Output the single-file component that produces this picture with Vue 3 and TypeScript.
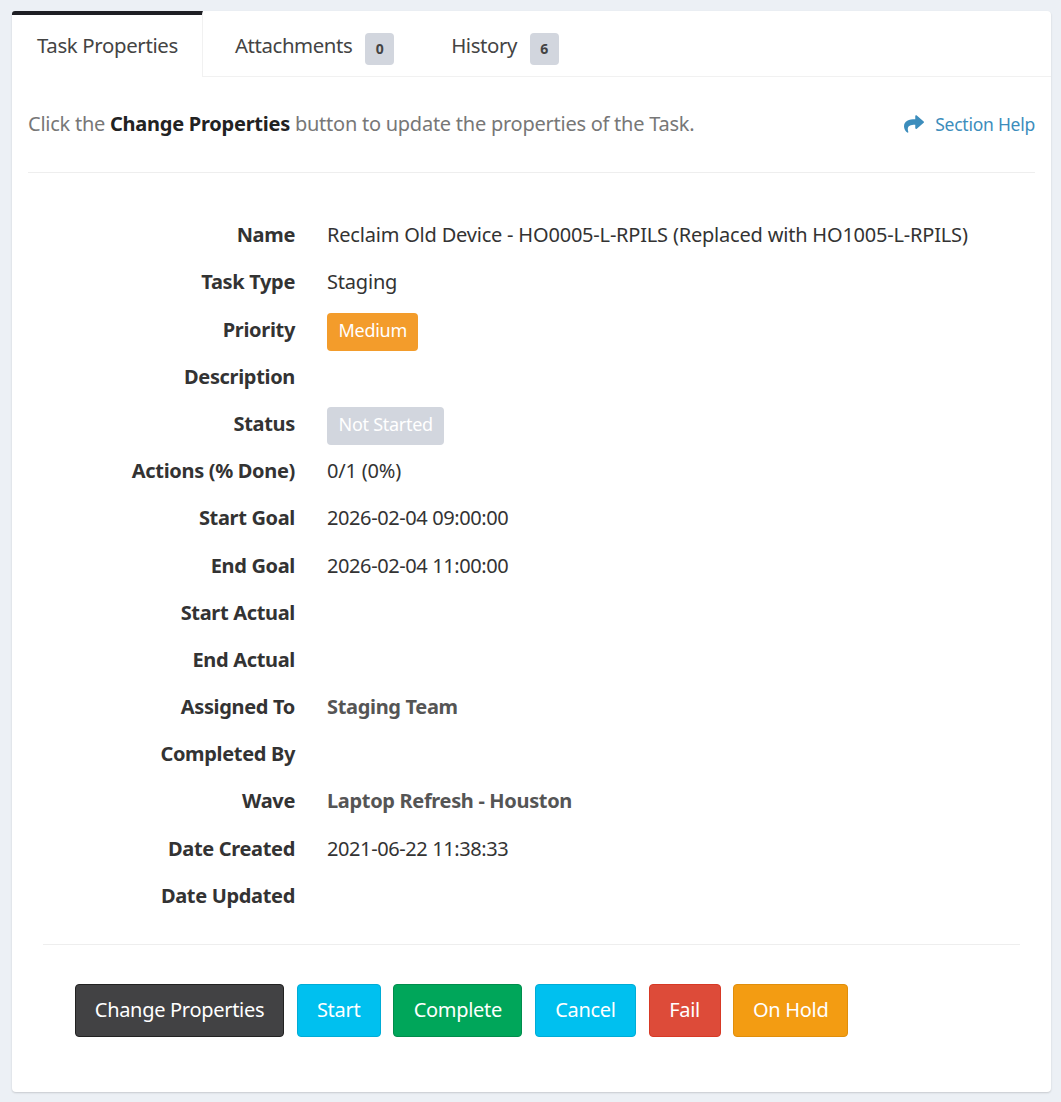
<script setup lang="ts">
type Row = { label: string; value?: string; kind?: 'text' | 'link' | 'medium' | 'muted' | 'date' }
const rows: Row[] = [
  { label: 'Name', value: 'Reclaim Old Device - HO0005-L-RPILS (Replaced with HO1005-L-RPILS)' },
  { label: 'Task Type', value: 'Staging' },
  { label: 'Priority', value: 'Medium', kind: 'medium' },
  { label: 'Description' },
  { label: 'Status', value: 'Not Started', kind: 'muted' },
  { label: 'Actions (% Done)', value: '0/1 (0%)' },
  { label: 'Start Goal', value: '2026-02-04 09:00:00', kind: 'date' },
  { label: 'End Goal', value: '2026-02-04 11:00:00', kind: 'date' },
  { label: 'Start Actual' },
  { label: 'End Actual' },
  { label: 'Assigned To', value: 'Staging Team', kind: 'link' },
  { label: 'Completed By' },
  { label: 'Wave', value: 'Laptop Refresh - Houston', kind: 'link' },
  { label: 'Date Created', value: '2021-06-22 11:38:33', kind: 'date' },
  { label: 'Date Updated' },
]
const buttons = [
  { text: 'Change Properties', cls: 'dark', width: 209 },
  { text: 'Start', cls: 'info', width: 84 },
  { text: 'Complete', cls: 'success', width: 129 },
  { text: 'Cancel', cls: 'info', width: 101 },
  { text: 'Fail', cls: 'danger', width: 72 },
  { text: 'On Hold', cls: 'warning', width: 115 },
]
</script>

<template>
  <div class="page">
    <div class="card">
      <div class="tabs">
        <div class="tab active">Task Properties</div>
        <div class="tab">Attachments <span class="count">0</span></div>
        <div class="tab">History <span class="count">6</span></div>
      </div>
      <div class="body">
        <div class="intro">
          <p>Click the <b>Change Properties</b> button to update the properties of the Task.</p>
          <a class="help">
            <svg width="20" height="20" viewBox="0 0 512 512"><path fill="#3c8dbc" d="M503.7 189.8L327.7 37.9C312.3 24.5 288 35.3 288 56v80.1C127.4 137.9 0 170.1 0 322.3c0 61.4 39.6 122.3 83.3 154.1 13.7 9.9 33.1-2.5 28.1-18.6C66 312.9 132.9 274.3 288 272.1V360c0 20.7 24.3 31.5 39.7 18.2l176-152c11.1-9.6 11.1-26.8 0-36.4z"/></svg>
            <span>Section Help</span>
          </a>
        </div>
        <dl class="props">
          <div v-for="r in rows" :key="r.label" class="row">
            <dt>{{ r.label }}</dt>
            <dd>
              <span v-if="r.kind === 'medium'" class="label orange">{{ r.value }}</span>
              <span v-else-if="r.kind === 'muted'" class="label grey">{{ r.value }}</span>
              <b v-else-if="r.kind === 'link'" class="link">{{ r.value }}</b>
              <span v-else-if="r.kind === 'date'" class="date">{{ r.value }}</span>
              <template v-else>{{ r.value }}</template>
            </dd>
          </div>
        </dl>
        <div class="footer">
          <button v-for="b in buttons" :key="b.text" :class="['btn', b.cls]" :style="{ width: b.width + 'px' }">{{ b.text }}</button>
        </div>
      </div>
    </div>
  </div>
</template>

<style>
html, body { margin: 0; background: #ecf0f5; }
</style>

<style scoped>
.page { padding: 11px 10px 10px 12px; font-family: "Noto Sans", "Open Sans", sans-serif; color: #333; }
.card { background: #fff; border-radius: 4px; box-shadow: 0 1px 2px rgba(0,0,0,.16); }
.tabs { display: flex; height: 66px; box-sizing: border-box; border-bottom: 1px solid #f1f1f1; }
.tab { padding: 20px 25px 0 32px; font-size: 20.4px; color: #444; letter-spacing: -.42px; }
.tab.active { box-sizing: border-box; width: 191px; height: 66px; padding: 16px 0 0 25px; border-top: 4px solid #1e1f24; border-right: 1px solid #f1f1f1; background: #fff; border-top-left-radius: 3px; letter-spacing: -.35px; }
.count { display: inline-block; background: #d2d6de; color: #444; font-size: 14px; font-weight: 700; width: 29px; text-align: center; height: 32px; line-height: 32px; border-radius: 4px; margin-left: 8px; letter-spacing: 0; vertical-align: -1px; }
.body { padding: 0 16px; }
.intro { display: flex; justify-content: space-between; align-items: center; height: 96px; box-sizing: border-box; padding-bottom: 2px; border-bottom: 1px solid #eee; }
.intro p { margin: 0; font-size: 20px; color: #777; letter-spacing: -.25px; }
.intro b { color: #222; }
.help { display: flex; align-items: center; gap: 11px; color: #3c8dbc; font-size: 17.5px; letter-spacing: -.25px; }
.props { margin: 48.2px 0 0; padding-bottom: 14.8px; }
.row { display: flex; height: 47.2px; font-size: 20px; letter-spacing: -.2px; }
dt { width: 267px; text-align: right; font-weight: 700; color: #333; letter-spacing: -.33px; }
dd { margin: 0 0 0 32px; }
.date { letter-spacing: -.4px; }
.label { display: inline-block; height: 38px; line-height: 35px; margin-top: -3px; padding: 0 11.5px; border-radius: 4px; color: #fff; font-size: 18px; box-sizing: border-box; letter-spacing: -.28px; }
.orange { background: #f39c2b; }
.grey { background: #d2d6de; }
.link { color: #555; letter-spacing: -.33px; }
.footer { margin: 0 15px; border-top: 1px solid #eee; padding: 39px 32px 55px; display: flex; gap: 12.65px; }
.btn { font: inherit; font-size: 20px; letter-spacing: -.3px; height: 53px; padding: 0 0 2px; border-radius: 4px; color: #fff; border: 1px solid transparent; }
.dark { background: #424244; border-color: #222; }
.info { background: #00c0ef; border-color: #00acd6; }
.success { background: #00a65a; border-color: #008d4c; }
.danger { background: #dd4b39; border-color: #d73925; }
.warning { background: #f39c12; border-color: #e08e0b; }
</style>
